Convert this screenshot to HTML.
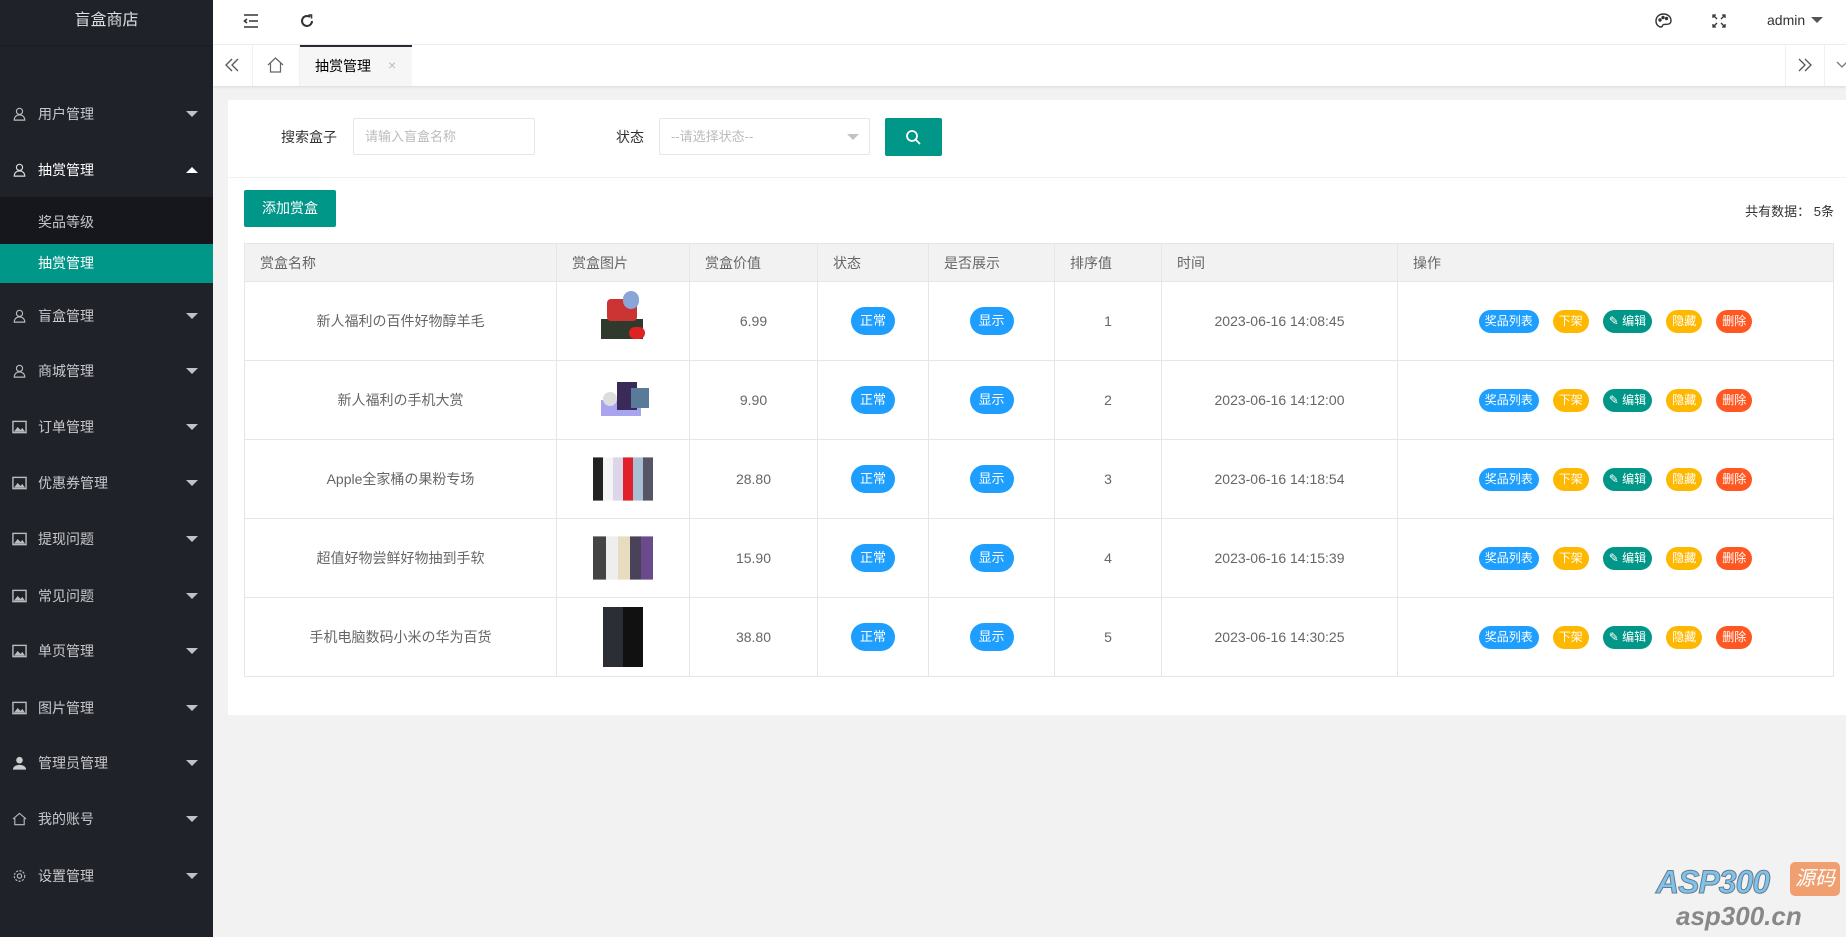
<!DOCTYPE html>
<html><head><meta charset="utf-8"><style>
*{margin:0;padding:0;box-sizing:border-box}
body{width:1846px;height:937px;overflow:hidden;background:#f2f2f2;font-family:"Liberation Sans","Noto Sans CJK SC",sans-serif;font-size:14px;color:#333;position:relative}
.side{position:absolute;left:0;top:0;width:213px;height:937px;background:#20222a;color:rgba(255,255,255,.75)}
.logo{height:45px;line-height:42px;text-align:center;font-size:16px;color:rgba(255,255,255,.85);box-shadow:0 1px 2px rgba(0,0,0,.2)}
.mi{position:absolute;left:0;width:213px;height:30px;line-height:30px;padding-left:38px;font-size:14px}
.mi .ic{position:absolute;left:12px;top:8px;width:15px;height:14px}
.mi .ar{position:absolute;right:15px;top:12px;border:6px solid transparent;border-top:6px solid #c2c2c2;border-bottom:0}
.mi .up{border-top:0;border-bottom:6px solid #fff}
.sub{position:absolute;left:0;top:197px;width:213px;height:86px;background:#16171d}
.hdr{position:absolute;left:213px;top:0;right:0;height:45px;background:#fff;border-bottom:1px solid #f0f0f0}
.tabs{position:absolute;left:213px;top:45px;right:0;height:41px;background:#fff;box-shadow:0 1px 3px rgba(0,0,0,.1)}
.card{position:absolute;left:228px;top:100px;width:1618px;height:615px;background:#fff}
.inp{position:absolute;border:1px solid #e6e6e6;height:37px;line-height:35px;padding-left:11px;color:#bbb;font-size:13px;border-radius:2px}
table{position:absolute;left:244px;top:243px;width:1590px;border-collapse:collapse;font-size:14px;color:#666}
td,th{border:1px solid #e6e6e6;font-weight:normal}
th{background:#f2f2f2;height:38px;text-align:left;padding-left:15px;color:#666}
td{height:79px;text-align:center}
.b{display:inline-block;color:#fff;border-radius:14px;font-size:13px;height:28px;line-height:28px;width:44px}
.s{display:inline-block;color:#fff;border-radius:12px;font-size:12px;height:23px;line-height:23px;padding:0 6px;margin:0 7px}
.bl{background:#1e9fff}.ye{background:#ffb800}.gr{background:#009688}.rd{background:#ff5722}
.img{display:inline-block;width:60px;height:60px;vertical-align:middle;position:relative}
</style></head><body>
<div class="side">
<div class="logo">盲盒商店</div>
<div class="sub"></div>
<div style="position:absolute;left:0;top:244px;width:213px;height:39px;background:#009688"></div>
<div class="mi" style="top:99px"><svg class="ic" viewBox="0 0 16 16" fill="none" stroke="#bbb" stroke-width="1.3"><circle cx="8" cy="5" r="3.5"/><path d="M2 15c0-4 3-6 6-6s6 2 6 6z"/></svg>用户管理<i class="ar"></i></div>
<div class="mi" style="top:155px;color:#fff"><svg class="ic" viewBox="0 0 16 16" fill="none" stroke="#ddd" stroke-width="1.3"><circle cx="8" cy="5" r="3.5"/><path d="M2 15c0-4 3-6 6-6s6 2 6 6z"/></svg>抽赏管理<i class="ar up"></i></div>
<div class="mi" style="top:207px">奖品等级</div>
<div class="mi" style="top:248px;color:#fff">抽赏管理</div>
<div class="mi" style="top:301px"><svg class="ic" viewBox="0 0 16 16" fill="none" stroke="#bbb" stroke-width="1.3"><circle cx="8" cy="5" r="3.5"/><path d="M2 15c0-4 3-6 6-6s6 2 6 6z"/></svg>盲盒管理<i class="ar"></i></div>
<div class="mi" style="top:356px"><svg class="ic" viewBox="0 0 16 16" fill="none" stroke="#bbb" stroke-width="1.3"><circle cx="8" cy="5" r="3.5"/><path d="M2 15c0-4 3-6 6-6s6 2 6 6z"/></svg>商城管理<i class="ar"></i></div>
<div class="mi" style="top:412px"><svg class="ic" viewBox="0 0 16 14"><rect x="1" y="1" width="14" height="12" fill="none" stroke="#bbb" stroke-width="1.5"/><path d="M2 12l4-5 3 3 2-2 3 4z" fill="#bbb"/></svg>订单管理<i class="ar"></i></div>
<div class="mi" style="top:468px"><svg class="ic" viewBox="0 0 16 14"><rect x="1" y="1" width="14" height="12" fill="none" stroke="#bbb" stroke-width="1.5"/><path d="M2 12l4-5 3 3 2-2 3 4z" fill="#bbb"/></svg>优惠券管理<i class="ar"></i></div>
<div class="mi" style="top:524px"><svg class="ic" viewBox="0 0 16 14"><rect x="1" y="1" width="14" height="12" fill="none" stroke="#bbb" stroke-width="1.5"/><path d="M2 12l4-5 3 3 2-2 3 4z" fill="#bbb"/></svg>提现问题<i class="ar"></i></div>
<div class="mi" style="top:581px"><svg class="ic" viewBox="0 0 16 14"><rect x="1" y="1" width="14" height="12" fill="none" stroke="#bbb" stroke-width="1.5"/><path d="M2 12l4-5 3 3 2-2 3 4z" fill="#bbb"/></svg>常见问题<i class="ar"></i></div>
<div class="mi" style="top:636px"><svg class="ic" viewBox="0 0 16 14"><rect x="1" y="1" width="14" height="12" fill="none" stroke="#bbb" stroke-width="1.5"/><path d="M2 12l4-5 3 3 2-2 3 4z" fill="#bbb"/></svg>单页管理<i class="ar"></i></div>
<div class="mi" style="top:693px"><svg class="ic" viewBox="0 0 16 14"><rect x="1" y="1" width="14" height="12" fill="none" stroke="#bbb" stroke-width="1.5"/><path d="M2 12l4-5 3 3 2-2 3 4z" fill="#bbb"/></svg>图片管理<i class="ar"></i></div>
<div class="mi" style="top:748px"><svg class="ic" viewBox="0 0 16 14" fill="#ccc"><circle cx="8" cy="4" r="3.5"/><path d="M1 14c0-3 3-5 7-5s7 2 7 5z"/></svg>管理员管理<i class="ar"></i></div>
<div class="mi" style="top:804px"><svg class="ic" viewBox="0 0 16 14" fill="none" stroke="#bbb" stroke-width="1.2"><path d="M1 7L8 1l7 6M3 6v7h10V6"/></svg>我的账号<i class="ar"></i></div>
<div class="mi" style="top:861px"><svg class="ic" viewBox="0 0 16 16" fill="none" stroke="#bbb" stroke-width="1.3"><circle cx="8" cy="8" r="2.5"/><circle cx="8" cy="8" r="6" stroke-dasharray="2.5 1.5"/></svg>设置管理<i class="ar"></i></div>
</div>

<div class="hdr">
<svg style="position:absolute;left:30px;top:14px" width="16" height="14" viewBox="0 0 16 14" fill="none" stroke="#333" stroke-width="1.6"><path d="M1 1h14M6 7h9M1 13h14M4 5L1.5 7 4 9"/></svg>
<svg style="position:absolute;left:86px;top:13px" width="16" height="16" viewBox="0 0 16 16" fill="none" stroke="#333" stroke-width="2"><path d="M13 8a5 5 0 1 1-2-4"/><path d="M9.5 2h3v3.5" stroke-width="1.6"/></svg>
<svg style="position:absolute;left:1442px;top:13px" width="17" height="16" viewBox="0 0 17 16" fill="none" stroke="#333" stroke-width="1.4"><path d="M8.5 1C4 1 1 4 1 8c0 4 3 6 5 6 2 0 1-2 2.5-2.5 2-.5 7.5 1 7.5-4C16 4 13 1 8.5 1z"/><circle cx="5" cy="7" r="1" fill="#333"/><circle cx="8" cy="4.5" r="1" fill="#333"/><circle cx="11.5" cy="5.5" r="1" fill="#333"/></svg>
<svg style="position:absolute;left:1499px;top:14px" width="14" height="14" viewBox="0 0 14 14" fill="none" stroke="#333" stroke-width="1.3"><path d="M1 4V1h3M10 1h3v3M13 10v3h-3M4 13H1v-3M1 1l4 4M13 1L9 5M13 13L9 9M1 13l4-4"/></svg>
<div style="position:absolute;left:1554px;top:12px;font-size:14px;color:#333">admin</div>
<i style="position:absolute;left:1598px;top:17px;border:6px solid transparent;border-top:6px solid #555;border-bottom:0"></i>
</div>

<div class="tabs">
<div style="position:absolute;left:0;top:0;width:40px;height:41px;border-right:1px solid #f0f0f0"></div>
<svg style="position:absolute;left:12px;top:13px" width="14" height="14" viewBox="0 0 14 14" fill="none" stroke="#555" stroke-width="1.3"><path d="M7 1L1 7l6 6M13 1L7 7l6 6"/></svg>
<svg style="position:absolute;left:54px;top:12px" width="17" height="16" viewBox="0 0 17 16" fill="none" stroke="#666" stroke-width="1.2"><path d="M1 8L8.5 1 16 8M3.5 6v9h10V6"/></svg>
<div style="position:absolute;left:86px;top:0;width:1px;height:41px;background:#f0f0f0"></div>
<div style="position:absolute;left:87px;top:0;width:112px;height:41px;background:#f6f6f6;border-top:2px solid #292b34"></div>
<div style="position:absolute;left:102px;top:11px;font-size:14px;color:#000">抽赏管理</div>
<div style="position:absolute;left:175px;top:12px;font-size:14px;color:#bbb">×</div>
<div style="position:absolute;left:1572px;top:0;width:40px;height:41px;border-left:1px solid #f0f0f0;border-right:1px solid #f0f0f0"></div>
<svg style="position:absolute;left:1585px;top:13px" width="14" height="14" viewBox="0 0 14 14" fill="none" stroke="#555" stroke-width="1.3"><path d="M1 1l6 6-6 6M7 1l6 6-6 6"/></svg>
<svg style="position:absolute;left:1623px;top:16px" width="12" height="8" viewBox="0 0 12 8" fill="none" stroke="#777" stroke-width="1.3"><path d="M1 1l5 5 5-5"/></svg>
</div>

<div class="card">
<div style="position:absolute;left:53px;top:27px;font-size:14px;color:#333">搜索盒子</div>
<div class="inp" style="left:125px;top:18px;width:182px">请输入盲盒名称</div>
<div style="position:absolute;left:388px;top:27px;font-size:14px;color:#333">状态</div>
<div class="inp" style="left:431px;top:18px;width:211px">--请选择状态--<i style="position:absolute;right:10px;top:15px;border:6px solid transparent;border-top:6px solid #c2c2c2;border-bottom:0"></i></div>
<div style="position:absolute;left:657px;top:18px;width:57px;height:38px;background:#009688;border-radius:2px"><svg style="position:absolute;left:20px;top:11px" width="17" height="17" viewBox="0 0 17 17" fill="none" stroke="#fff" stroke-width="1.8"><circle cx="7" cy="7" r="5"/><path d="M11 11l4 4"/></svg></div>
<div style="position:absolute;left:0;top:77px;width:1618px;height:1px;background:#f2f2f2"></div>
<div style="position:absolute;left:16px;top:90px;width:92px;height:37px;background:#009688;color:#fff;line-height:37px;text-align:center;border-radius:2px">添加赏盒</div>
<div style="position:absolute;right:12px;top:101px;font-size:13px;color:#333">共有数据： 5条</div>
</div>

<table>
<tr><th style="width:312px">赏盒名称</th><th style="width:133px">赏盒图片</th><th style="width:128px">赏盒价值</th><th style="width:111px">状态</th><th style="width:126px">是否展示</th><th style="width:107px">排序值</th><th style="width:236px">时间</th><th>操作</th></tr>
<tr><td>新人福利の百件好物醇羊毛</td><td><span class="img"><span style="position:absolute;left:8px;top:28px;width:42px;height:20px;background:#2f3a2c"></span><span style="position:absolute;left:14px;top:8px;width:30px;height:22px;background:#c33;border-radius:4px"></span><span style="position:absolute;left:30px;top:0;width:16px;height:18px;background:#8aa6d8;border-radius:8px"></span><span style="position:absolute;left:36px;top:36px;width:16px;height:12px;background:#d22;border-radius:6px"></span></span></td><td>6.99</td><td><span class="b bl">正常</span></td><td><span class="b bl">显示</span></td><td>1</td><td>2023-06-16 14:08:45</td><td><span class="s bl">奖品列表</span><span class="s ye">下架</span><span class="s gr">✎ 编辑</span><span class="s ye">隐藏</span><span class="s rd">删除</span></td></tr>
<tr><td>新人福利の手机大赏</td><td><span class="img"><span style="position:absolute;left:8px;top:30px;width:40px;height:16px;background:#a9a4f0"></span><span style="position:absolute;left:24px;top:12px;width:20px;height:28px;background:#3a2a5a"></span><span style="position:absolute;left:38px;top:18px;width:18px;height:20px;background:#5a7a9a"></span><span style="position:absolute;left:10px;top:22px;width:14px;height:14px;background:#ddd;border-radius:7px"></span></span></td><td>9.90</td><td><span class="b bl">正常</span></td><td><span class="b bl">显示</span></td><td>2</td><td>2023-06-16 14:12:00</td><td><span class="s bl">奖品列表</span><span class="s ye">下架</span><span class="s gr">✎ 编辑</span><span class="s ye">隐藏</span><span class="s rd">删除</span></td></tr>
<tr><td>Apple全家桶の果粉专场</td><td><span class="img" style="background:linear-gradient(90deg,#222 0 17%,#f4f4f4 17% 33%,#ddd6ea 33% 50%,#e0202a 50% 67%,#a9c0d4 67% 83%,#556 83%);transform:scaleY(.72)"></span></td><td>28.80</td><td><span class="b bl">正常</span></td><td><span class="b bl">显示</span></td><td>3</td><td>2023-06-16 14:18:54</td><td><span class="s bl">奖品列表</span><span class="s ye">下架</span><span class="s gr">✎ 编辑</span><span class="s ye">隐藏</span><span class="s rd">删除</span></td></tr>
<tr><td>超值好物尝鲜好物抽到手软</td><td><span class="img" style="background:linear-gradient(90deg,#444 0 22%,#eee 22% 42%,#e8dcc0 42% 62%,#4a4258 62% 80%,#6a4a8a 80%);transform:scaleY(.72)"></span></td><td>15.90</td><td><span class="b bl">正常</span></td><td><span class="b bl">显示</span></td><td>4</td><td>2023-06-16 14:15:39</td><td><span class="s bl">奖品列表</span><span class="s ye">下架</span><span class="s gr">✎ 编辑</span><span class="s ye">隐藏</span><span class="s rd">删除</span></td></tr>
<tr><td>手机电脑数码小米の华为百货</td><td><span class="img"><span style="position:absolute;left:10px;top:0;width:40px;height:60px;background:linear-gradient(90deg,#2c2e36 50%,#111 50%)"></span></span></td><td>38.80</td><td><span class="b bl">正常</span></td><td><span class="b bl">显示</span></td><td>5</td><td>2023-06-16 14:30:25</td><td><span class="s bl">奖品列表</span><span class="s ye">下架</span><span class="s gr">✎ 编辑</span><span class="s ye">隐藏</span><span class="s rd">删除</span></td></tr>
</table>

<div style="position:absolute;left:1656px;top:864px;font:italic bold 32px 'Liberation Sans',sans-serif;color:#7cc4ee;-webkit-text-stroke:1px #6a7a8a;letter-spacing:-1px">ASP300</div>
<div style="position:absolute;left:1790px;top:862px;width:50px;height:34px;background:#f0a070;border-radius:5px;color:#fff;font-size:20px;font-style:italic;line-height:34px;text-align:center">源码</div>
<div style="position:absolute;left:1676px;top:901px;font:italic bold 26px 'Liberation Sans',sans-serif;color:#888">asp300.cn</div>
</body></html>
